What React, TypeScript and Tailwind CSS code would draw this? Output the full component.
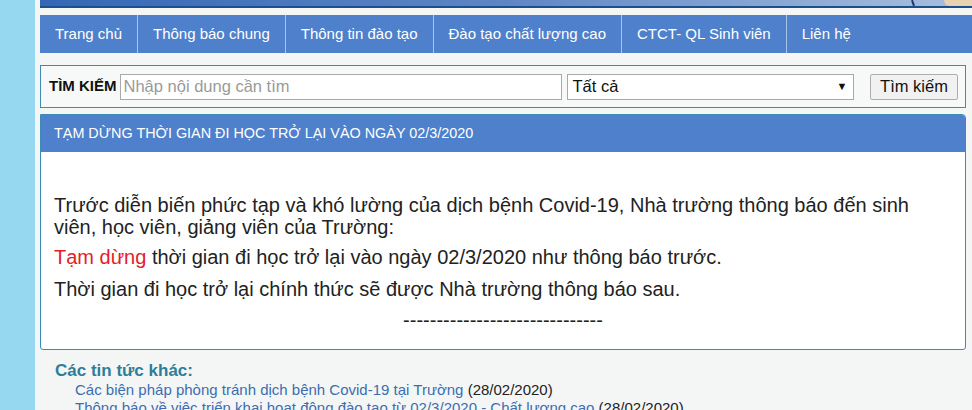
const navItems = [
  "Trang chủ",
  "Thông báo chung",
  "Thông tin đào tạo",
  "Đào tạo chất lượng cao",
  "CTCT- QL Sinh viên",
  "Liên hệ",
];

const otherNews = [
  { title: "Các biện pháp phòng tránh dịch bệnh Covid-19 tại Trường", date: "28/02/2020" },
  {
    title: "Thông báo về việc triển khai hoạt động đào tạo từ 02/3/2020 - Chất lượng cao",
    date: "28/02/2020",
  },
];

export default function App() {
  return (
    <div className="flex h-[410px] w-[972px] overflow-hidden bg-[#f4f6f6] font-['Liberation_Sans',Arial,sans-serif]">
      {/* left sky stripe */}
      <div className="w-[35px] shrink-0 bg-[#97d8f1]" />

      <div className="flex min-w-0 flex-1 flex-col pl-[5px]">
        {/* banner bottom edge */}
        <div className="relative h-[8px] shrink-0 border-b-2 border-[#1d4f8e] bg-gradient-to-r from-[#3367b5] via-[#5f86c4] to-[#a9c0de]">
          <div className="absolute right-[58px] top-0 h-[6px] w-[2px] rotate-[-20deg] bg-[#1b3a6b]" />
          <div className="absolute right-0 top-0 h-[6px] w-[28px] rounded-bl-[10px] bg-[#e9d2b0]" />
        </div>

        {/* main nav */}
        <nav className="mt-[7px] flex h-[38px] shrink-0 bg-[#4e80cb]">
          {navItems.map((item, i) => (
            <div
              key={item}
              className={`flex items-center px-[15px] text-[15px] text-white ${
                i < navItems.length - 1 ? "border-r border-[#a9c3e8]" : ""
              }`}
            >
              {item}
            </div>
          ))}
        </nav>

        {/* search */}
        <div className="mr-[6px] mt-[12px] flex h-[43px] shrink-0 items-center border border-[#3a8bb7] bg-[#f7f9f9] pl-[8px] pr-[7px]">
          <span className="mr-[3px] text-[15px] font-bold text-[#111]">TÌM KIẾM</span>
          <div className="flex h-[26px] w-[442px] items-center border border-[#a9a9a9] bg-white px-[3px] text-[16.5px] text-[#9a9a9a]">
            Nhập nội dung cần tìm
          </div>
          <div className="ml-[5px] flex h-[26px] w-[287px] items-center justify-between border border-[#a9a9a9] bg-white pl-[5px] pr-[5px] text-[16.5px] text-[#111]">
            <span>Tất cả</span>
            <span className="text-[11px]">▼</span>
          </div>
          <div className="ml-auto flex h-[26px] w-[88px] items-center justify-center rounded-[2px] border border-[#adadad] bg-[#f1f1f1] text-[16.5px] text-[#111]">
            Tìm kiếm
          </div>
        </div>

        {/* article panel */}
        <div className="mr-[6px] mt-[6px] flex h-[236px] shrink-0 flex-col overflow-hidden rounded-tr-[4px] rounded-b-[3px] border border-[#3a8bb7] bg-white">
          <div className="flex h-[37px] shrink-0 items-center bg-[#4e80cb] px-[13px] text-[14.4px] text-white">
            TẠM DỪNG THỜI GIAN ĐI HỌC TRỞ LẠI VÀO NGÀY 02/3/2020
          </div>
          <div className="px-[13px] pt-[42px] text-[20px] leading-[22px] text-[#222]">
            <p>
              Trước diễn biến phức tạp và khó lường của dịch bệnh Covid-19, Nhà trường thông báo đến sinh
              <br />
              viên, học viên, giảng viên của Trường:
            </p>
            <p className="mt-[8px]">
              <span className="text-[#e4202a]">Tạm dừng</span> thời gian đi học trở lại vào ngày 02/3/2020
              như thông báo trước.
            </p>
            <p className="mt-[10px]">Thời gian đi học trở lại chính thức sẽ được Nhà trường thông báo sau.</p>
            <p className="mt-[9px] text-center">------------------------------</p>
          </div>
        </div>

        {/* other news */}
        <div className="pl-[15px] pt-[11px]">
          <div className="text-[17px] font-bold leading-[20px] text-[#2f7d99]">Các tin tức khác:</div>
          <ul className="pl-[20px] text-[15px] leading-[18px]">
            {otherNews.map((n) => (
              <li key={n.title} className="whitespace-nowrap">
                <span className="text-[#3b6eb0]">{n.title}</span>{" "}
                <span className="text-[#222]">({n.date})</span>
              </li>
            ))}
          </ul>
        </div>
      </div>
    </div>
  );
}
